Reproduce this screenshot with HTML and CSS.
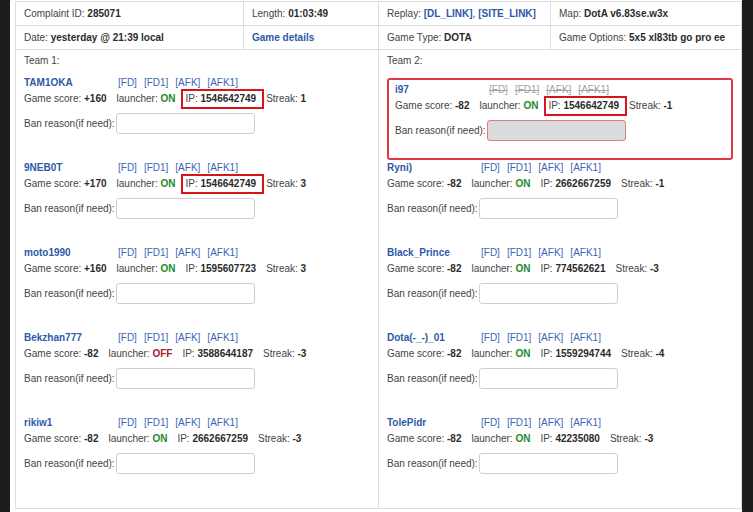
FILE: index.html
```html
<!DOCTYPE html>
<html lang="en">
<head>
<meta charset="utf-8">
<title>Complaint 285071</title>
<link rel="stylesheet" href="styles.css">
</head>
<body>
<div class="page">
  <table class="complaint">
    <colgroup>
      <col class="col-a"><col class="col-b"><col class="col-c"><col class="col-d">
    </colgroup>
    <tr class="info">
      <td>Complaint ID: <b>285071</b></td>
      <td>Length: <b>01:03:49</b></td>
      <td>Replay: <a class="strong" href="#">[DL_LINK]</a>, <a class="strong" href="#">[SITE_LINK]</a></td>
      <td>Map: <b>DotA v6.83se.w3x</b></td>
    </tr>
    <tr class="info">
      <td>Date: <b>yesterday @ 21:39 local</b></td>
      <td><a class="strong" href="#">Game details</a></td>
      <td>Game Type: <b>DOTA</b></td>
      <td>Game Options: <b>5x5 xl83tb go pro ee</b></td>
    </tr>
    <tr class="teams">
      <td colspan="2">
        <div class="team-label">Team 1:</div>

        <div class="player">
          <div class="p-head"><span class="p-name">TAM1OKA</span><span class="p-links"><a href="#">[FD]</a><a href="#">[FD1]</a><a href="#">[AFK]</a><a href="#">[AFK1]</a></span></div>
          <div class="p-stats"><span>Game score: <b>+160</b></span><span>launcher: <b class="on">ON</b></span><span class="ip dup">IP: <b>1546642749</b></span><span>Streak: <b>1</b></span></div>
          <div class="p-ban"><label>Ban reason(if need):</label><input type="text"></div>
        </div>

        <div class="player">
          <div class="p-head"><span class="p-name">9NEB0T</span><span class="p-links"><a href="#">[FD]</a><a href="#">[FD1]</a><a href="#">[AFK]</a><a href="#">[AFK1]</a></span></div>
          <div class="p-stats"><span>Game score: <b>+170</b></span><span>launcher: <b class="on">ON</b></span><span class="ip dup">IP: <b>1546642749</b></span><span>Streak: <b>3</b></span></div>
          <div class="p-ban"><label>Ban reason(if need):</label><input type="text"></div>
        </div>

        <div class="player">
          <div class="p-head"><span class="p-name">moto1990</span><span class="p-links"><a href="#">[FD]</a><a href="#">[FD1]</a><a href="#">[AFK]</a><a href="#">[AFK1]</a></span></div>
          <div class="p-stats"><span>Game score: <b>+160</b></span><span>launcher: <b class="on">ON</b></span><span class="ip">IP: <b>1595607723</b></span><span>Streak: <b>3</b></span></div>
          <div class="p-ban"><label>Ban reason(if need):</label><input type="text"></div>
        </div>

        <div class="player">
          <div class="p-head"><span class="p-name">Bekzhan777</span><span class="p-links"><a href="#">[FD]</a><a href="#">[FD1]</a><a href="#">[AFK]</a><a href="#">[AFK1]</a></span></div>
          <div class="p-stats"><span>Game score: <b>-82</b></span><span>launcher: <b class="off">OFF</b></span><span class="ip">IP: <b>3588644187</b></span><span>Streak: <b>-3</b></span></div>
          <div class="p-ban"><label>Ban reason(if need):</label><input type="text"></div>
        </div>

        <div class="player">
          <div class="p-head"><span class="p-name">rikiw1</span><span class="p-links"><a href="#">[FD]</a><a href="#">[FD1]</a><a href="#">[AFK]</a><a href="#">[AFK1]</a></span></div>
          <div class="p-stats"><span>Game score: <b>-82</b></span><span>launcher: <b class="on">ON</b></span><span class="ip">IP: <b>2662667259</b></span><span>Streak: <b>-3</b></span></div>
          <div class="p-ban"><label>Ban reason(if need):</label><input type="text"></div>
        </div>
      </td>
      <td colspan="2">
        <div class="team-label">Team 2:</div>

        <div class="player reported">
          <div class="p-head"><span class="p-name">i97</span><span class="p-links struck"><a href="#">[FD]</a><a href="#">[FD1]</a><a href="#">[AFK]</a><a href="#">[AFK1]</a></span></div>
          <div class="p-stats"><span>Game score: <b>-82</b></span><span>launcher: <b class="on">ON</b></span><span class="ip dup">IP: <b>1546642749</b></span><span>Streak: <b>-1</b></span></div>
          <div class="p-ban"><label>Ban reason(if need):</label><input type="text" disabled></div>
        </div>

        <div class="player">
          <div class="p-head"><span class="p-name">Ryni)</span><span class="p-links"><a href="#">[FD]</a><a href="#">[FD1]</a><a href="#">[AFK]</a><a href="#">[AFK1]</a></span></div>
          <div class="p-stats"><span>Game score: <b>-82</b></span><span>launcher: <b class="on">ON</b></span><span class="ip">IP: <b>2662667259</b></span><span>Streak: <b>-1</b></span></div>
          <div class="p-ban"><label>Ban reason(if need):</label><input type="text"></div>
        </div>

        <div class="player">
          <div class="p-head"><span class="p-name">Black_Prince</span><span class="p-links"><a href="#">[FD]</a><a href="#">[FD1]</a><a href="#">[AFK]</a><a href="#">[AFK1]</a></span></div>
          <div class="p-stats"><span>Game score: <b>-82</b></span><span>launcher: <b class="on">ON</b></span><span class="ip">IP: <b>774562621</b></span><span>Streak: <b>-3</b></span></div>
          <div class="p-ban"><label>Ban reason(if need):</label><input type="text"></div>
        </div>

        <div class="player">
          <div class="p-head"><span class="p-name">Dota(-_-)_01</span><span class="p-links"><a href="#">[FD]</a><a href="#">[FD1]</a><a href="#">[AFK]</a><a href="#">[AFK1]</a></span></div>
          <div class="p-stats"><span>Game score: <b>-82</b></span><span>launcher: <b class="on">ON</b></span><span class="ip">IP: <b>1559294744</b></span><span>Streak: <b>-4</b></span></div>
          <div class="p-ban"><label>Ban reason(if need):</label><input type="text"></div>
        </div>

        <div class="player">
          <div class="p-head"><span class="p-name">TolePidr</span><span class="p-links"><a href="#">[FD]</a><a href="#">[FD1]</a><a href="#">[AFK]</a><a href="#">[AFK1]</a></span></div>
          <div class="p-stats"><span>Game score: <b>-82</b></span><span>launcher: <b class="on">ON</b></span><span class="ip">IP: <b>42235080</b></span><span>Streak: <b>-3</b></span></div>
          <div class="p-ban"><label>Ban reason(if need):</label><input type="text"></div>
        </div>
      </td>
    </tr>
  </table>
</div>
</body>
</html>
```

FILE: styles.css
```css
html, body {
  margin: 0;
  height: 512px;
  overflow: hidden;
  background: #1d1d1d;
}

body {
  font-family: "Liberation Sans", Arial, sans-serif;
  font-size: 10px;
  line-height: 16px;
  color: #444;
}

b {
  color: #2b2b2b;
}

a {
  color: #3a66b5;
  text-decoration: none;
}

a.strong {
  font-weight: bold;
  color: #2d5aa6;
}

/* white sheet between the dark side strips */
.page {
  margin-left: 10px;
  width: 732px;
  min-height: 512px;
  box-sizing: border-box;
  padding: 1px 1px 0 5px;
  background: #fff;
}

.complaint {
  width: 726px;
  border-collapse: collapse;
  table-layout: fixed;
}

.col-a { width: 228px; }
.col-b { width: 135px; }
.col-c { width: 172px; }
.col-d { width: 191px; }

.complaint td {
  border: 1px solid #dedede;
  vertical-align: top;
  padding: 0 8px;
}

.info td {
  height: 23px;
  box-sizing: border-box;
  line-height: 15px;
  padding-top: 4px;
  padding-bottom: 4px;
  white-space: nowrap;
}

.teams td {
  padding: 3px 8px 8px;
}

.team-label {
  margin-bottom: 6px;
}

/* one player entry */
.player {
  margin-bottom: 26px;
}

.player.reported {
  margin-top: 9px;
  margin-bottom: 0;
  border: 2px solid #e03a3e;
  border-radius: 3px;
  padding: 2px 6px 17px;
}

.p-head {
  display: flex;
}

.p-name {
  width: 94px;
  flex: none;
  font-weight: bold;
  color: #2d5aa6;
}

.p-links {
  display: flex;
  gap: 7px;
}

.p-links.struck a {
  color: #a3a3a3;
  text-decoration: line-through;
}

.p-stats {
  display: flex;
  gap: 10px;
  white-space: nowrap;
}

b.on { color: #23892a; }
b.off { color: #a3202c; }

.ip {
  position: relative;
}

/* red frame around an address shared by several players */
.ip.dup::after {
  content: "";
  position: absolute;
  left: -4px;
  right: -8px;
  top: -2px;
  bottom: -2px;
  border: 2px solid #d8141b;
}

.p-ban {
  display: flex;
  align-items: center;
  gap: 1px;
  margin-top: 6px;
}

.p-ban input {
  width: 139px;
  height: 21px;
  box-sizing: border-box;
  margin: 0;
  padding: 0 4px;
  border: 1px solid #cfcfcf;
  border-radius: 3px;
  background: #fff;
  font: inherit;
}

.reported .p-ban input {
  background: #dcdcdc;
  border-color: #e37a7c;
}
```
